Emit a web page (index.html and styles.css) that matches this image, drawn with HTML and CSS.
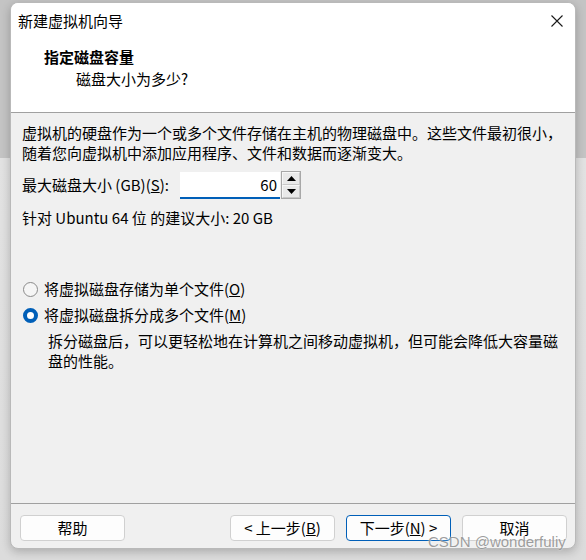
FILE: index.html
```html
<!DOCTYPE html>
<html lang="zh-CN">
<head>
<meta charset="utf-8">
<title>新建虚拟机向导</title>
<link rel="stylesheet" href="styles.css">
</head>
<body>
<div class="dialog">
  <div class="titlebar">
    <span class="title">新建虚拟机向导</span>
    <svg class="close" width="12" height="12" viewBox="0 0 12 12"><path d="M0.5 0.5 L11.5 11.5 M11.5 0.5 L0.5 11.5" stroke="#1a1a1a" stroke-width="1.1" fill="none"/></svg>
  </div>
  <div class="header">
    <div class="h-title">指定磁盘容量</div>
    <div class="h-sub">磁盘大小为多少?</div>
  </div>
  <div class="content">
    <p class="para">虚拟机的硬盘作为一个或多个文件存储在主机的物理磁盘中。这些文件最初很小，随着您向虚拟机中添加应用程序、文件和数据而逐渐变大。</p>
    <div class="size-row">
      <span class="size-label">最大磁盘大小 (GB)(<u>S</u>):</span>
      <div class="num-input">60</div>
      <div class="spin">
        <div class="spin-btn"><svg width="9" height="5" viewBox="0 0 9 5"><path d="M0 5 L4.5 0 L9 5 Z" fill="#000"/></svg></div>
        <div class="spin-btn"><svg width="9" height="5" viewBox="0 0 9 5"><path d="M0 0 L4.5 5 L9 0 Z" fill="#000"/></svg></div>
      </div>
    </div>
    <p class="rec">针对 Ubuntu 64 位 的建议大小: 20 GB</p>
    <div class="radio-row first">
      <span class="radio"></span>
      <span class="radio-text">将虚拟磁盘存储为单个文件(<u>O</u>)</span>
    </div>
    <div class="radio-row">
      <span class="radio checked"></span>
      <span class="radio-text">将虚拟磁盘拆分成多个文件(<u>M</u>)</span>
    </div>
    <p class="radio-desc">拆分磁盘后，可以更轻松地在计算机之间移动虚拟机，但可能会降低大容量磁盘的性能。</p>
  </div>
  <div class="footer">
    <button class="btn">帮助</button>
    <span class="spacer"></span>
    <button class="btn">&lt; 上一步(<u>B</u>)</button>
    <button class="btn focus">下一步(<u>N</u>) &gt;</button>
    <button class="btn">取消</button>
  </div>
</div>
<div class="watermark">CSDN @wonderfuliy</div>
</body>
</html>
```

FILE: styles.css
```css
html, body {
  margin: 0;
  padding: 0;
}
body {
  width: 586px;
  height: 560px;
  overflow: hidden;
  position: relative;
  background: linear-gradient(to bottom, #c4c4c4 0, #c4c4c4 158px, #e2e2e2 158px, #dcdcdc 100%);
  font-family: "Noto Sans CJK SC", "Noto Sans", sans-serif;
  font-size: 15px;
  color: #000;
}
.dialog {
  box-sizing: border-box;
  margin: 2px 0 0 10px;
  width: 566px;
  height: 547px;
  border: 1px solid #b9b9b9;
  border-radius: 8px;
  background: #f0f0f0;
  overflow: hidden;
  box-shadow: 0 3px 10px rgba(0, 0, 0, 0.22);
  display: flex;
  flex-direction: column;
}
.titlebar {
  height: 35px;
  background: #fff;
  display: flex;
  align-items: center;
  justify-content: space-between;
  padding-left: 7px;
}
.title {
  line-height: 20px;
}
.close {
  margin-right: 12px;
}
.header {
  background: #fff;
  border-bottom: 1px solid #a0a0a0;
  padding-top: 8px;
  box-sizing: border-box;
  height: 75px;
}
.h-title {
  font-weight: bold;
  line-height: 22px;
  padding-left: 33px;
}
.h-sub {
  line-height: 22px;
  padding-left: 65px;
}
.content {
  height: 390px;
  padding: 10px 0 0 11px;
  box-sizing: border-box;
}
.para {
  margin: 0;
  width: 545px;
  line-height: 20px;
  word-break: break-all;
}
.size-row {
  margin-top: 8px;
  height: 28px;
  display: flex;
  align-items: center;
}
.size-label {
  width: 158px;
  line-height: 20px;
}
.num-input {
  box-sizing: border-box;
  width: 100px;
  height: 27px;
  margin-top: 1px;
  background: #fff;
  border-bottom: 2px solid #005fb8;
  text-align: right;
  padding-right: 3px;
  line-height: 25px;
}
.spin {
  margin-left: 1px;
  width: 20px;
  height: 28px;
  display: flex;
  flex-direction: column;
  border: 1px solid #a8a8a8;
  box-sizing: border-box;
  background: #e9e9e9;
}
.spin-btn {
  flex: 1;
  display: flex;
  align-items: center;
  justify-content: center;
  border: 1px solid #f7f7f7;
  border-right-color: #c8c8c8;
  border-bottom-color: #c8c8c8;
}
.rec {
  margin: 9px 0 0 0;
  line-height: 20px;
}
.radio-row {
  display: flex;
  align-items: center;
  height: 20px;
  margin-top: 6px;
}
.radio-row.first {
  margin-top: 51px;
}
.radio {
  box-sizing: border-box;
  width: 15px;
  height: 15px;
  margin-left: 1px;
  border-radius: 50%;
  border: 1px solid #8a8a8a;
  background: #f5f5f5;
}
.radio.checked {
  border: 4px solid #005fb8;
  background: #fff;
}
.radio-text {
  margin-left: 6px;
  line-height: 20px;
}
.radio-desc {
  margin: 6px 0 0 26px;
  width: 514px;
  line-height: 20px;
  word-break: break-all;
}
.footer {
  border-top: 1px solid #a0a0a0;
  padding: 11px 8px 0 9px;
  display: flex;
  align-items: flex-start;
  gap: 11px;
  flex: 1;
}
.spacer {
  flex: 1;
}
.btn {
  box-sizing: border-box;
  width: 105px;
  height: 26px;
  border: 1px solid #d0d0d0;
  border-radius: 4px;
  background: #fdfdfd;
  font-family: "Noto Sans CJK SC", "Noto Sans", sans-serif;
  font-size: 15px;
  color: #000;
  padding: 0;
  line-height: 22px;
}
.btn.focus {
  border-color: #005fb8;
}
.watermark {
  position: absolute;
  left: 428px;
  top: 534px;
  font-family: "Liberation Sans", Arial, sans-serif;
  font-size: 15px;
  color: rgba(140, 140, 140, 0.85);
  text-shadow: 0 0 2px rgba(255, 255, 255, 0.9);
  line-height: 15px;
}
```
